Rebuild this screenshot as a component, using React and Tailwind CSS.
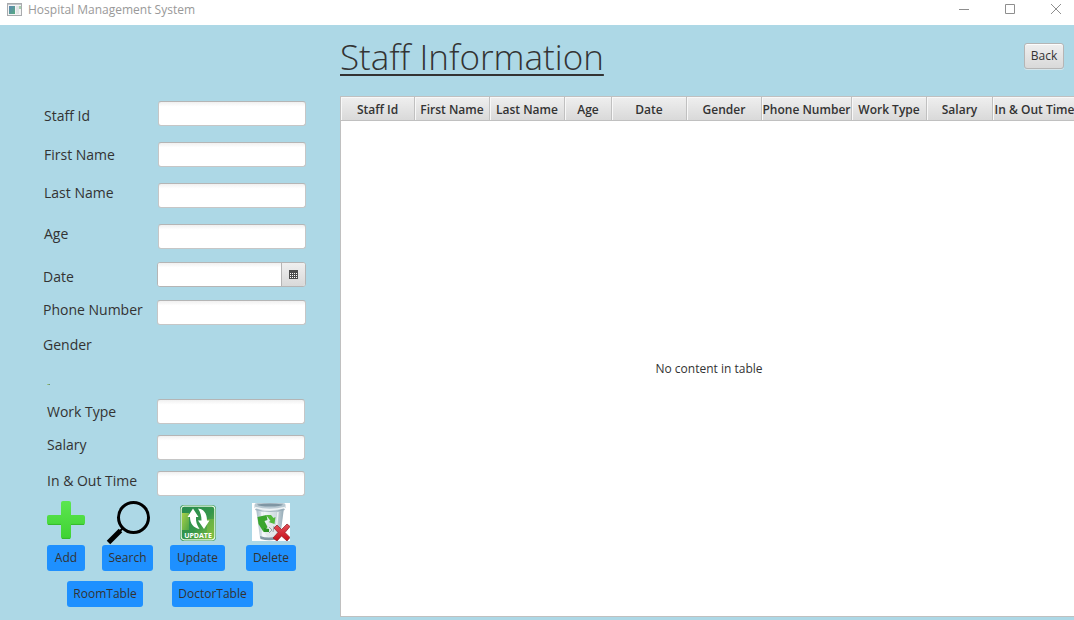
import React from "react";

const fieldClass =
  "h-[25px] min-w-0 flex-1 rounded-[3px] border border-[#c6c6c6] border-t-[#b5b5b5] bg-linear-to-b from-[#f0f0f0] to-white to-20% px-2 text-xs outline-none";

const columns = [
  { name: "Staff Id", width: "w-[74px]" },
  { name: "First Name", width: "w-[75px]" },
  { name: "Last Name", width: "w-[75px]" },
  { name: "Age", width: "w-[47px]" },
  { name: "Date", width: "w-[75px]" },
  { name: "Gender", width: "w-[75px]" },
  { name: "Phone Number", width: "w-[90px]" },
  { name: "Work Type", width: "w-[75px]" },
  { name: "Salary", width: "w-[66px]" },
  { name: "In & Out Time", width: "w-[84px]" },
];

function FormRow({ id, label, align = "items-start", labelWidth = "w-[114px]", children }) {
  return (
    <div className={`flex ${align}`}>
      <label htmlFor={id} className={`shrink-0 text-sm leading-5 ${labelWidth}`}>
        {label}
      </label>
      {children || <input id={id} type="text" className={fieldClass} />}
    </div>
  );
}

function BlueButton({ children, width }) {
  return (
    <button
      type="button"
      className={`h-[26px] rounded-[3px] bg-[#1e90ff] text-xs leading-4 whitespace-nowrap ${width}`}
    >
      {children}
    </button>
  );
}

function WindowIcon() {
  return (
    <svg width="16" height="14" viewBox="0 0 16 14" aria-hidden="true">
      <defs>
        <linearGradient id="pane" x1="0" y1="0" x2="1" y2="1">
          <stop offset="0" stopColor="#5c86b4" />
          <stop offset="1" stopColor="#57ab7f" />
        </linearGradient>
      </defs>
      <rect x="0.5" y="0.5" width="14" height="12" fill="#f4f4f4" stroke="#a9abae" />
      <path d="M1 1.5h13" stroke="#c3c6ca" />
      <rect x="2" y="3" width="6" height="8" fill="url(#pane)" />
      <rect x="9" y="3" width="3" height="8" fill="#e2e4e6" />
      <rect x="12" y="3" width="2" height="3" fill="#a5cfae" />
    </svg>
  );
}

function PlusIcon() {
  return (
    <svg width="38" height="38" viewBox="0 0 38 38" aria-hidden="true">
      <defs>
        <linearGradient id="plus" x1="0" y1="0" x2="0" y2="1">
          <stop offset="0" stopColor="#5ce64f" />
          <stop offset="1" stopColor="#3fd233" />
        </linearGradient>
      </defs>
      <path
        d="M16 0h6q2 0 2 2v12h12q2 0 2 2v6q0 2-2 2H24v12q0 2-2 2h-6q-2 0-2-2V24H2q-2 0-2-2v-6q0-2 2-2h12V2q0-2 2-2z"
        fill="url(#plus)"
      />
      <path d="M1 23.4h13M24 23.4h13M15 37.4h8" stroke="#35b82b" strokeWidth="1" />
    </svg>
  );
}

function SearchIcon() {
  return (
    <svg width="44" height="44" viewBox="0 0 44 44" aria-hidden="true">
      <circle cx="27.5" cy="16.5" r="15" fill="none" stroke="#000" strokeWidth="3" />
      <path d="M17 27l-3 3" stroke="#000" strokeWidth="2" />
      <path d="M14.500 29.500L2.500 41.500" stroke="#000" strokeWidth="5" />
    </svg>
  );
}

function UpdateIcon() {
  return (
    <svg width="36" height="36" viewBox="0 0 36 36" aria-hidden="true">
      <defs>
        <linearGradient id="upd" x1="0" y1="0" x2="1" y2="1">
          <stop offset="0" stopColor="#278b50" />
          <stop offset="0.55" stopColor="#35964a" />
          <stop offset="1" stopColor="#8fc63d" />
        </linearGradient>
        <linearGradient id="updLight" x1="0" y1="0" x2="1" y2="1">
          <stop offset="0" stopColor="#a8d048" />
          <stop offset="1" stopColor="#4ea545" />
        </linearGradient>
      </defs>
      <rect width="36" height="36" rx="4" fill="#3c9a5c" />
      <rect x="1.2" y="1.2" width="33.6" height="33.6" rx="3" fill="url(#upd)" stroke="#e4f4df" strokeWidth="1.2" />
      <path d="M2 8h7v17H2z" fill="url(#updLight)" />
      <path d="M27 14h7v16h-7z" fill="#7fbd43" opacity="0.6" />
      <path d="M13 3.500L18.500 12H16c-.3 4.500.8 8 3.500 12-6-1-9.500-5.500-9.500-12H7.500z" fill="#fff" />
      <path d="M18 3.500c5.500.5 9 4.500 9 12h2.500L24 24l-6-8.500h3.500c0-4.500-1-8.500-3.500-12z" fill="#fff" />
      <text
        x="18"
        y="32.500"
        textAnchor="middle"
        fontFamily="Open Sans, sans-serif"
        fontSize="7"
        fontWeight="700"
        fill="#fff"
      >
        UPDATE
      </text>
    </svg>
  );
}

function DeleteIcon() {
  return (
    <svg width="38" height="38" viewBox="0 0 38 38" aria-hidden="true">
      <defs>
        <linearGradient id="bin" x1="0" y1="0" x2="1" y2="0">
          <stop offset="0" stopColor="#a5bac6" />
          <stop offset="0.3" stopColor="#f1f6f8" />
          <stop offset="0.7" stopColor="#d0dce2" />
          <stop offset="1" stopColor="#93a9b5" />
        </linearGradient>
        <linearGradient id="cross" x1="0" y1="0" x2="0" y2="1">
          <stop offset="0" stopColor="#e4505a" />
          <stop offset="1" stopColor="#c60f17" />
        </linearGradient>
      </defs>
      <rect width="38" height="38" fill="#fff" />
      <path d="M4 5h28l-4 30q-10 4-20 0z" fill="url(#bin)" />
      <path d="M2.500 2q0-2 3-2h25q3 0 3 2v3q-15 4-31 0z" fill="#b9c9d2" />
      <path d="M5 1.500q13-2 26 0-2 2-13 2T5 1.500z" fill="#7f96a3" />
      <path d="M3 4.500q15 4 30 0" fill="none" stroke="#eff4f6" strokeWidth="1.500" />
      <path d="M3 6.500q15 4 30 0" fill="none" stroke="#8fa5b1" strokeWidth="0.7" />
      <path d="M10 9l1 25M26 9l-2 20" stroke="#fff" strokeWidth="1.500" opacity="0.7" />
      <path d="M8 33q9 3 18 0l-.5 3q-8 2.500-17 0z" fill="#8398a4" />
      <path d="M13 22l5-4 4 3 4 3-2 8-8 2-4-5z" fill="#e3e8ea" />
      <path d="M17 24l3 3-3 3M22 23l-1 6" fill="none" stroke="#9ba5aa" />
      <path d="M5.500 14l9-2 1 5-3 1 3 6-4 5-5-8z" fill="#3ba52e" />
      <path d="M14 12h5l2.500 3 2-1-1 7-6-2 2-1-3-4z" fill="#52b93c" />
      <path d="M12 25l5 1v3h-5z" fill="#2d9225" />
      <path
        d="M25 22l4.500 4.500L35 21l3 2.500-5 6 5 5L35 38l-5.500-5L25 38l-4-3 5-5.500-4-4.500z"
        fill="url(#cross)"
        stroke="#8e1a20"
        strokeWidth="0.7"
      />
    </svg>
  );
}

function CalendarIcon() {
  return (
    <svg width="9" height="9" viewBox="0 0 9 9" aria-hidden="true" shapeRendering="crispEdges">
      <path d="M0 0h9v9H0z" fill="#4d4d4d" />
      <path
        d="M1 3h1v1H1zM3 3h1v1H3zM5 3h1v1H5zM7 3h1v1H7zM1 5h1v1H1zM3 5h1v1H3zM5 5h1v1H5zM7 5h1v1H7zM1 7h1v1H1zM3 7h1v1H3zM5 7h1v1H5zM7 7h1v1H7z"
        fill="#fff"
      />
    </svg>
  );
}

function TitleBar() {
  return (
    <header className="flex h-[25px] shrink-0 items-start justify-between bg-white pl-[7px] text-[#999]">
      <div className="flex items-center gap-[5px] pt-px">
        <WindowIcon />
        <span className="text-xs leading-[18px]">Hospital Management System</span>
      </div>
      <div className="flex gap-[10px]">
        <button type="button" aria-label="Minimize" className="flex h-[18px] w-9 items-center justify-center">
          <svg width="10" height="11" viewBox="0 0 10 11">
            <path d="M0 5.500h10" stroke="#8e8e8e" />
          </svg>
        </button>
        <button type="button" aria-label="Maximize" className="flex h-[18px] w-9 items-center justify-center">
          <svg width="10" height="10" viewBox="0 0 10 10">
            <path d="M.5.5h9v9h-9z" fill="none" stroke="#8e8e8e" />
          </svg>
        </button>
        <button type="button" aria-label="Close" className="flex h-[18px] w-9 items-center justify-center">
          <svg width="10" height="10" viewBox="0 0 10 10">
            <path d="M0 0l10 10M10 0L0 10" stroke="#8e8e8e" />
          </svg>
        </button>
      </div>
    </header>
  );
}

function StaffForm() {
  return (
    <form className="w-[340px] shrink-0 pt-[76px]">
      <div className="flex flex-col gap-4 pr-[34px] pl-11">
        <FormRow id="staffId" label="Staff Id" align="items-end" />
        <FormRow id="firstName" label="First Name" align="items-center" />
        <FormRow id="lastName" label="Last Name" />
        <FormRow id="age" label="Age" />
      </div>

      <div className="mt-[13px] flex flex-col gap-[13px] pr-[34px] pl-[43px]">
        <FormRow id="date" label="Date" align="items-end">
          <div className="flex h-[25px] min-w-0 flex-1 overflow-hidden rounded-[3px] border border-[#b5b5b5] bg-white">
            <input
              id="date"
              type="text"
              className="min-w-0 flex-1 bg-linear-to-b from-[#f0f0f0] to-white to-20% px-2 text-xs outline-none"
            />
            <button
              type="button"
              aria-label="Choose date"
              className="flex w-6 items-center justify-center border-l border-[#b5b5b5] bg-linear-to-b from-[#efefef] to-[#d9d9d9]"
            >
              <CalendarIcon />
            </button>
          </div>
        </FormRow>
        <FormRow id="phone" label="Phone Number" />
      </div>

      <div className="mt-[10px] mb-[14px] flex h-[50px] flex-col justify-between pl-[43px]">
        <span className="text-sm leading-5">Gender</span>
        <span className="ml-1 h-px w-[3px] bg-linear-to-r from-[#a9d98b] to-[#5f7f6b]" />
      </div>

      <div className="flex flex-col gap-[11px] pr-[35px] pl-[47px]">
        <FormRow id="workType" label="Work Type" labelWidth="w-[110px]" align="items-center" />
        <FormRow id="salary" label="Salary" labelWidth="w-[110px]" />
        <FormRow id="inOut" label="In & Out Time" labelWidth="w-[110px]" />
      </div>

      <div className="mt-[5px] flex gap-[17px] pl-[47px]">
        <div className="flex flex-col items-center justify-between">
          <PlusIcon />
          <BlueButton width="w-[38px]">Add</BlueButton>
        </div>
        <div className="flex flex-col items-center">
          <SearchIcon />
          <BlueButton width="w-[51px]">Search</BlueButton>
        </div>
        <div className="flex flex-col items-center justify-end gap-1">
          <UpdateIcon />
          <BlueButton width="w-[55px]">Update</BlueButton>
        </div>
        <div className="ml-1 flex flex-col items-center justify-end gap-1">
          <DeleteIcon />
          <BlueButton width="w-[50px]">Delete</BlueButton>
        </div>
      </div>

      <div className="mt-[10px] flex gap-[29px] pl-[67px]">
        <BlueButton width="w-[76px]">RoomTable</BlueButton>
        <BlueButton width="w-[81px]">DoctorTable</BlueButton>
      </div>
    </form>
  );
}

function StaffTable() {
  return (
    <div className="mb-[3px] min-h-0 flex-1 overflow-hidden border-y border-l border-[#c0c0c0] bg-white">
      <table className="h-full w-[736px] min-w-full table-fixed border-separate border-spacing-0 text-xs">
        <thead>
          <tr className="h-6">
            {columns.map((column) => (
              <th
                key={column.name}
                className={`border-r border-b border-[#c0c0c0] bg-linear-to-b from-[#efefef] to-[#d9d9d9] px-0 pt-[5px] pb-[2px] text-center leading-4 font-semibold whitespace-nowrap shadow-[inset_1px_1px_0_#f8f8f8] ${column.width}`}
              >
                {column.name}
              </th>
            ))}
          </tr>
        </thead>
        <tbody>
          <tr>
            <td colSpan={columns.length} className="text-center align-middle">
              No content in table
            </td>
          </tr>
        </tbody>
      </table>
    </div>
  );
}

export default function App() {
  return (
    <div className="flex h-screen flex-col overflow-hidden bg-[#add8e6] font-['Open_Sans','Noto_Sans',sans-serif] text-[#333]">
      <TitleBar />
      <main className="flex min-h-0 flex-1">
        <StaffForm />
        <section className="flex min-w-0 flex-1 flex-col">
          <div className="flex h-[71px] shrink-0 items-start justify-between pt-2 pr-[10px]">
            <h1 className="text-[35px] leading-[48px] font-light underline decoration-2 underline-offset-4">
              Staff Information
            </h1>
            <button
              type="button"
              className="mt-[10px] h-[26px] w-10 rounded-[3px] border border-[#b5b5b5] bg-linear-to-b from-[#efefef] to-[#d9d9d9] text-xs leading-4 shadow-[inset_0_1px_0_#fcfcfc,0_1px_0_#d5e6ec]"
            >
              Back
            </button>
          </div>
          <StaffTable />
        </section>
      </main>
    </div>
  );
}
